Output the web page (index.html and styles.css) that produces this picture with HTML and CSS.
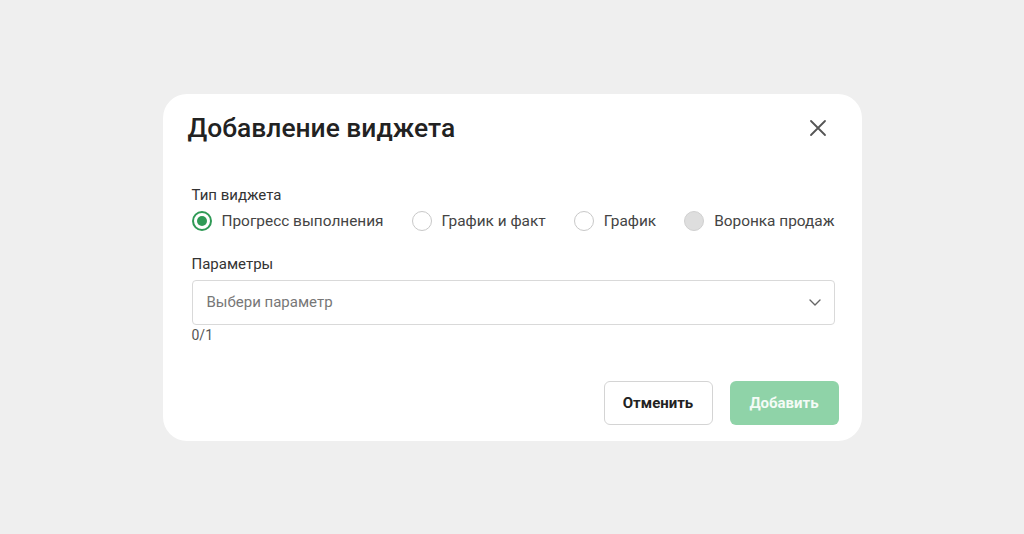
FILE: index.html
```html
<!DOCTYPE html>
<html lang="ru">
<head>
    <meta charset="UTF-8">
    <meta name="viewport" content="width=device-width, initial-scale=1.0">
    <title>Добавление виджета</title>
    <link rel="stylesheet" href="styles.css">
</head>
<body>
    <div class="modal">
        <div class="modal-header">
            <h2 class="modal-title">Добавление виджета</h2>
            <button class="close-btn" aria-label="Закрыть">
                <svg width="18" height="18" viewBox="0 0 18 18">
                    <path d="M2 2 L16 16 M16 2 L2 16" stroke="#555" stroke-width="1.8" stroke-linecap="round"/>
                </svg>
            </button>
        </div>

        <div class="field-label">Тип виджета</div>
        <div class="radio-group">
            <label class="radio checked"><span class="dot"></span>Прогресс выполнения</label>
            <label class="radio"><span class="dot"></span>График и факт</label>
            <label class="radio"><span class="dot"></span>График</label>
            <label class="radio disabled"><span class="dot"></span>Воронка продаж</label>
        </div>

        <div class="field-label params">Параметры</div>
        <div class="select">
            <span>Выбери параметр</span>
            <svg width="14" height="14" viewBox="0 0 14 14">
                <path d="M2 5 L7 10 L12 5" fill="none" stroke="#666" stroke-width="1.4" stroke-linecap="round" stroke-linejoin="round"/>
            </svg>
        </div>
        <div class="counter">0/1</div>

        <div class="actions">
            <button class="btn btn-outline">Отменить</button>
            <button class="btn btn-primary" disabled>Добавить</button>
        </div>
    </div>
</body>
</html>
```

FILE: styles.css
```css
html, body {
    height: 100%;
}
body {
    margin: 0;
    background-color: #efefef;
    font-family: Roboto, "Liberation Sans", Arial, sans-serif;
    color: #333333;
    display: flex;
    align-items: center;
    justify-content: center;
}
.modal {
    width: 699px;
    height: 347px;
    box-sizing: border-box;
    background-color: #ffffff;
    border-radius: 24px;
    padding: 18px 23px 16px 29px;
}
.modal-header {
    display: flex;
    align-items: center;
    justify-content: space-between;
    height: 32px;
    margin-left: -4px;
}
.modal-title {
    margin: 0;
    font-size: 26.4px;
    font-weight: 500;
    color: #222222;
}
.close-btn {
    background: none;
    border: none;
    padding: 0;
    width: 26px;
    height: 26px;
    display: flex;
    align-items: center;
    justify-content: center;
    margin-right: 8px;
    cursor: pointer;
}
.field-label {
    font-size: 15px;
    color: #333333;
    margin-top: 42px;
    line-height: 18px;
}
.field-label.params {
    margin-top: 24px;
}
.radio-group {
    display: flex;
    gap: 28px;
    margin-top: 7px;
    height: 20px;
    align-items: center;
}
.radio {
    display: flex;
    align-items: center;
    font-size: 15.4px;
    color: #444444;
    cursor: pointer;
}
.radio .dot {
    width: 20px;
    height: 20px;
    box-sizing: border-box;
    border: 1.5px solid #c8c8c8;
    border-radius: 50%;
    margin-right: 10px;
    position: relative;
}
.radio.checked .dot {
    border: 2px solid #2f9a56;
}
.radio.checked .dot::after {
    content: "";
    position: absolute;
    left: 3px;
    top: 3px;
    width: 10px;
    height: 10px;
    border-radius: 50%;
    background-color: #2f9a56;
}
.radio.disabled .dot {
    background-color: #dedede;
    border-color: #d0d0d0;
}
.select {
    margin-top: 7px;
    width: 643px;
    height: 45px;
    box-sizing: border-box;
    border: 1px solid #d9d9d9;
    border-radius: 4px;
    display: flex;
    align-items: center;
    justify-content: space-between;
    padding: 0 12px 0 14px;
    font-size: 15px;
    color: #777777;
}
.counter {
    font-size: 14px;
    color: #555555;
    margin-top: 2px;
}
.actions {
    display: flex;
    justify-content: flex-end;
    gap: 17px;
    margin-top: 38px;
}
.btn {
    width: 109px;
    height: 44px;
    border-radius: 6px;
    font-family: Roboto, "Liberation Sans", Arial, sans-serif;
    font-size: 15px;
    font-weight: 700;
    cursor: pointer;
}
.btn-outline {
    background-color: #ffffff;
    border: 1px solid #d4d4d4;
    color: #222222;
}
.btn-primary {
    background-color: #8fd3a8;
    border: none;
    color: #f4fbf6;
}
```
